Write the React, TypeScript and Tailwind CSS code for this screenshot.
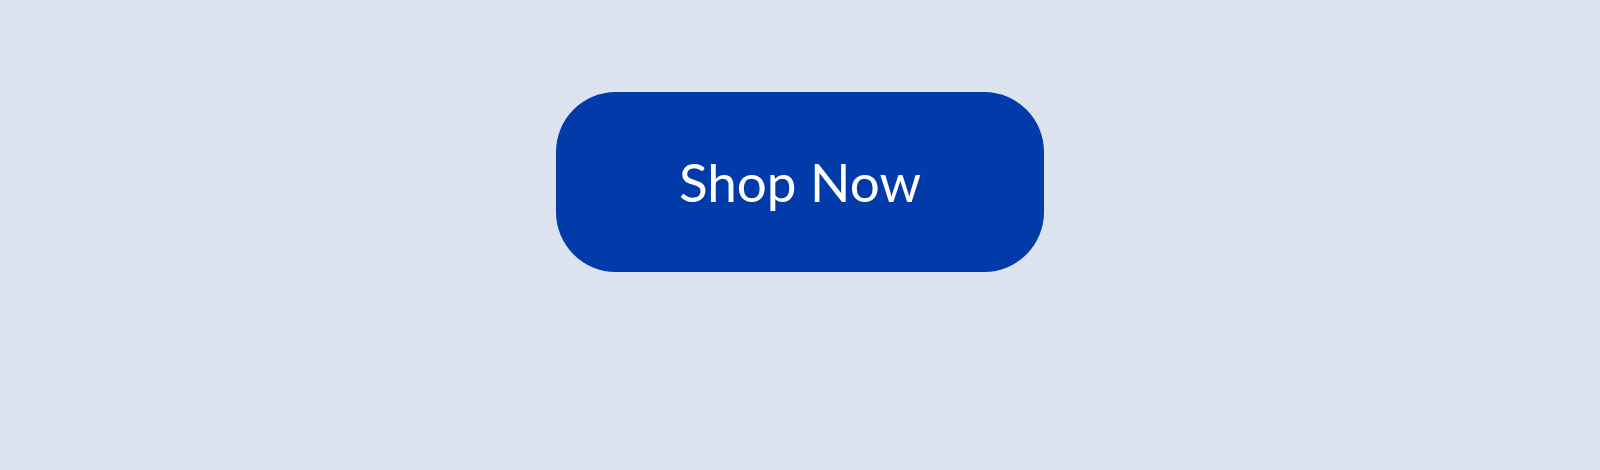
export default function App() {
  return (
    <div className="flex h-[470px] w-full justify-center bg-[#dde3ee] pt-[92px]">
      <button
        type="button"
        className="flex h-[180px] w-[488px] items-center justify-center rounded-[60px] bg-[#003ba9] text-[53px] text-white"
        style={{ fontFamily: 'Lato, "Open Sans", sans-serif' }}
      >
        Shop Now
      </button>
    </div>
  )
}
